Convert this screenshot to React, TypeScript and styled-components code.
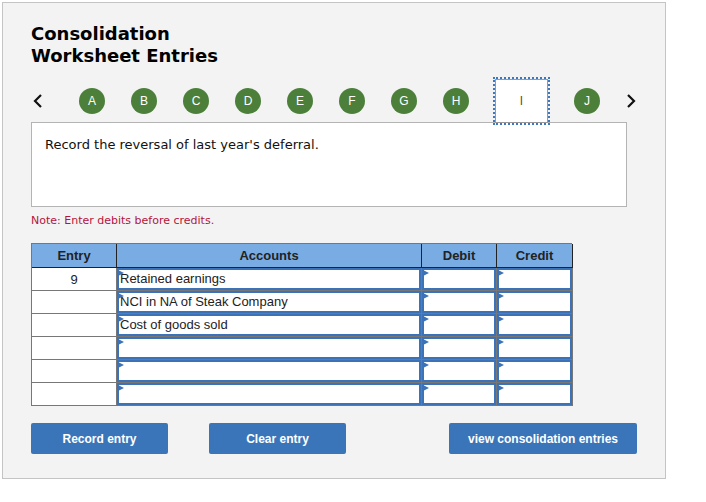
import styled, { createGlobalStyle } from 'styled-components';

const GlobalStyle = createGlobalStyle`
  html, body {
    margin: 0;
    padding: 0;
    background: #fff;
  }
  body {
    font-family: "Liberation Sans", Arial, sans-serif;
  }
`;

const steps = ['A', 'B', 'C', 'D', 'E', 'F', 'G', 'H', 'I', 'J'];
const activeStep = 'I';

const rows = [
  { entry: '9', account: 'Retained earnings' },
  { entry: '', account: 'NCI in NA of Steak Company' },
  { entry: '', account: 'Cost of goods sold' },
  { entry: '', account: '' },
  { entry: '', account: '' },
  { entry: '', account: '' },
];

const Chevron = ({ dir }: { dir: 'left' | 'right' }) => (
  <svg width='10' height='16' viewBox='0 0 10 16'>
    <path
      d={dir === 'left' ? 'M8 2 L2 8 L8 14' : 'M2 2 L8 8 L2 14'}
      fill='none'
      stroke='#111'
      strokeWidth='2.2'
    />
  </svg>
);

export default function App() {
  return (
    <>
      <GlobalStyle />
      <Panel>
        <Title>
          Consolidation
          <br />
          Worksheet Entries
        </Title>

        <Nav>
          <Arrow $side='left'>
            <Chevron dir='left' />
          </Arrow>
          {steps.map((step) =>
            step === activeStep ? (
              <ActiveStep key={step}>{step}</ActiveStep>
            ) : (
              <StepDot key={step}>{step}</StepDot>
            ),
          )}
          <Arrow $side='right'>
            <Chevron dir='right' />
          </Arrow>
        </Nav>

        <Prompt>Record the reversal of last year's deferral.</Prompt>

        <Note>Note: Enter debits before credits.</Note>

        <Sheet>
          <HeadCell>Entry</HeadCell>
          <HeadCell>Accounts</HeadCell>
          <HeadCell>Debit</HeadCell>
          <HeadCell>Credit</HeadCell>
          {rows.map((row, i) => (
            <Row key={i}>
              <EntryCell>{row.entry}</EntryCell>
              <InputCell>
                <Field>{row.account}</Field>
              </InputCell>
              <InputCell>
                <Field />
              </InputCell>
              <InputCell>
                <Field />
              </InputCell>
            </Row>
          ))}
        </Sheet>

        <Actions>
          <ActionButton $width={137}>Record entry</ActionButton>
          <ActionButton $width={137} $gap={41}>
            Clear entry
          </ActionButton>
          <ActionButton $width={188} $gap={103}>
            view consolidation entries
          </ActionButton>
        </Actions>
      </Panel>
    </>
  );
}

const Panel = styled.div`
  box-sizing: border-box;
  margin: 2px 0 0 2px;
  width: 664px;
  height: 477px;
  border: 1px solid #c4c4c4;
  background: #f3f3f3;
  padding: 20px 0 0 28px;
`;

const Title = styled.h1`
  margin: 0;
  font-family: "DejaVu Sans", Verdana, sans-serif;
  font-weight: bold;
  font-size: 18px;
  line-height: 22px;
  color: #000;
`;

const Nav = styled.div`
  display: flex;
  align-items: center;
  gap: 26px;
  height: 44px;
  margin-top: 12px;
`;

const Arrow = styled.div<{ $side: 'left' | 'right' }>`
  display: flex;
  align-items: center;
  width: 10px;
  margin-left: ${({ $side }) => ($side === 'left' ? '2px' : '0')};
  margin-right: ${({ $side }) => ($side === 'left' ? '10px' : '0')};
`;

const StepDot = styled.div`
  width: 26px;
  height: 26px;
  border-radius: 50%;
  background: #4b7f3a;
  color: #fff;
  font-size: 12px;
  display: grid;
  place-items: center;
`;

const ActiveStep = styled.div`
  box-sizing: border-box;
  width: 53px;
  height: 44px;
  background: #fff;
  border: 1px solid #999;
  outline: 2px dotted #3b78c2;
  outline-offset: 0;
  color: #6b4a2a;
  font-size: 12px;
  display: grid;
  place-items: center;
  position: relative;
  z-index: 1;
`;

const Prompt = styled.div`
  box-sizing: border-box;
  width: 596px;
  height: 85px;
  margin-top: -1px;
  background: #fff;
  border: 1px solid #b4b4b4;
  padding: 14px 0 0 13px;
  font-family: "DejaVu Sans", Verdana, sans-serif;
  font-size: 13px;
  color: #111;
`;

const Note = styled.div`
  margin-top: 7px;
  font-family: "DejaVu Sans", Verdana, sans-serif;
  font-size: 11px;
  line-height: 14px;
  color: #b3133d;
`;

const Sheet = styled.div`
  display: grid;
  grid-template-columns: 85px 305px 75px 76px;
  width: 541px;
  margin-top: 15px;
  border-top: 1px solid #777;
  border-left: 1px solid #777;
  box-sizing: border-box;
`;

const HeadCell = styled.div`
  height: 24px;
  box-sizing: border-box;
  background: #78ace3;
  border-right: 1px solid #222;
  border-bottom: 1px solid #222;
  font-size: 13px;
  font-weight: bold;
  color: #222;
  display: grid;
  place-items: center;
`;

const Row = styled.div`
  display: contents;
`;

const EntryCell = styled.div`
  height: 23px;
  box-sizing: border-box;
  background: #fff;
  border-right: 1px solid #777;
  border-bottom: 1px solid #777;
  font-size: 13px;
  color: #222;
  display: grid;
  place-items: center;
`;

const InputCell = styled.div`
  height: 23px;
  box-sizing: border-box;
  border-right: 1px solid #777;
  border-bottom: 1px solid #777;
  background: #fff;
`;

const Field = styled.div`
  position: relative;
  box-sizing: border-box;
  height: 100%;
  border: 2px solid #3b72b8;
  padding-left: 1px;
  font-size: 13px;
  line-height: 18px;
  color: #222;
  white-space: nowrap;

  &::before {
    content: '';
    position: absolute;
    left: -1px;
    top: 0;
    border-top: 3px solid transparent;
    border-bottom: 3px solid transparent;
    border-left: 6px solid #3b72b8;
  }
`;

const Actions = styled.div`
  display: flex;
  margin-top: 17px;
`;

const ActionButton = styled.button<{ $width: number; $gap?: number }>`
  width: ${({ $width }) => $width}px;
  height: 31px;
  margin-left: ${({ $gap = 0 }) => $gap}px;
  border: none;
  border-radius: 2px;
  background: #3a75b9;
  color: #fff;
  font-family: "Liberation Sans", Arial, sans-serif;
  font-size: 12px;
  font-weight: bold;
  cursor: pointer;
`;
